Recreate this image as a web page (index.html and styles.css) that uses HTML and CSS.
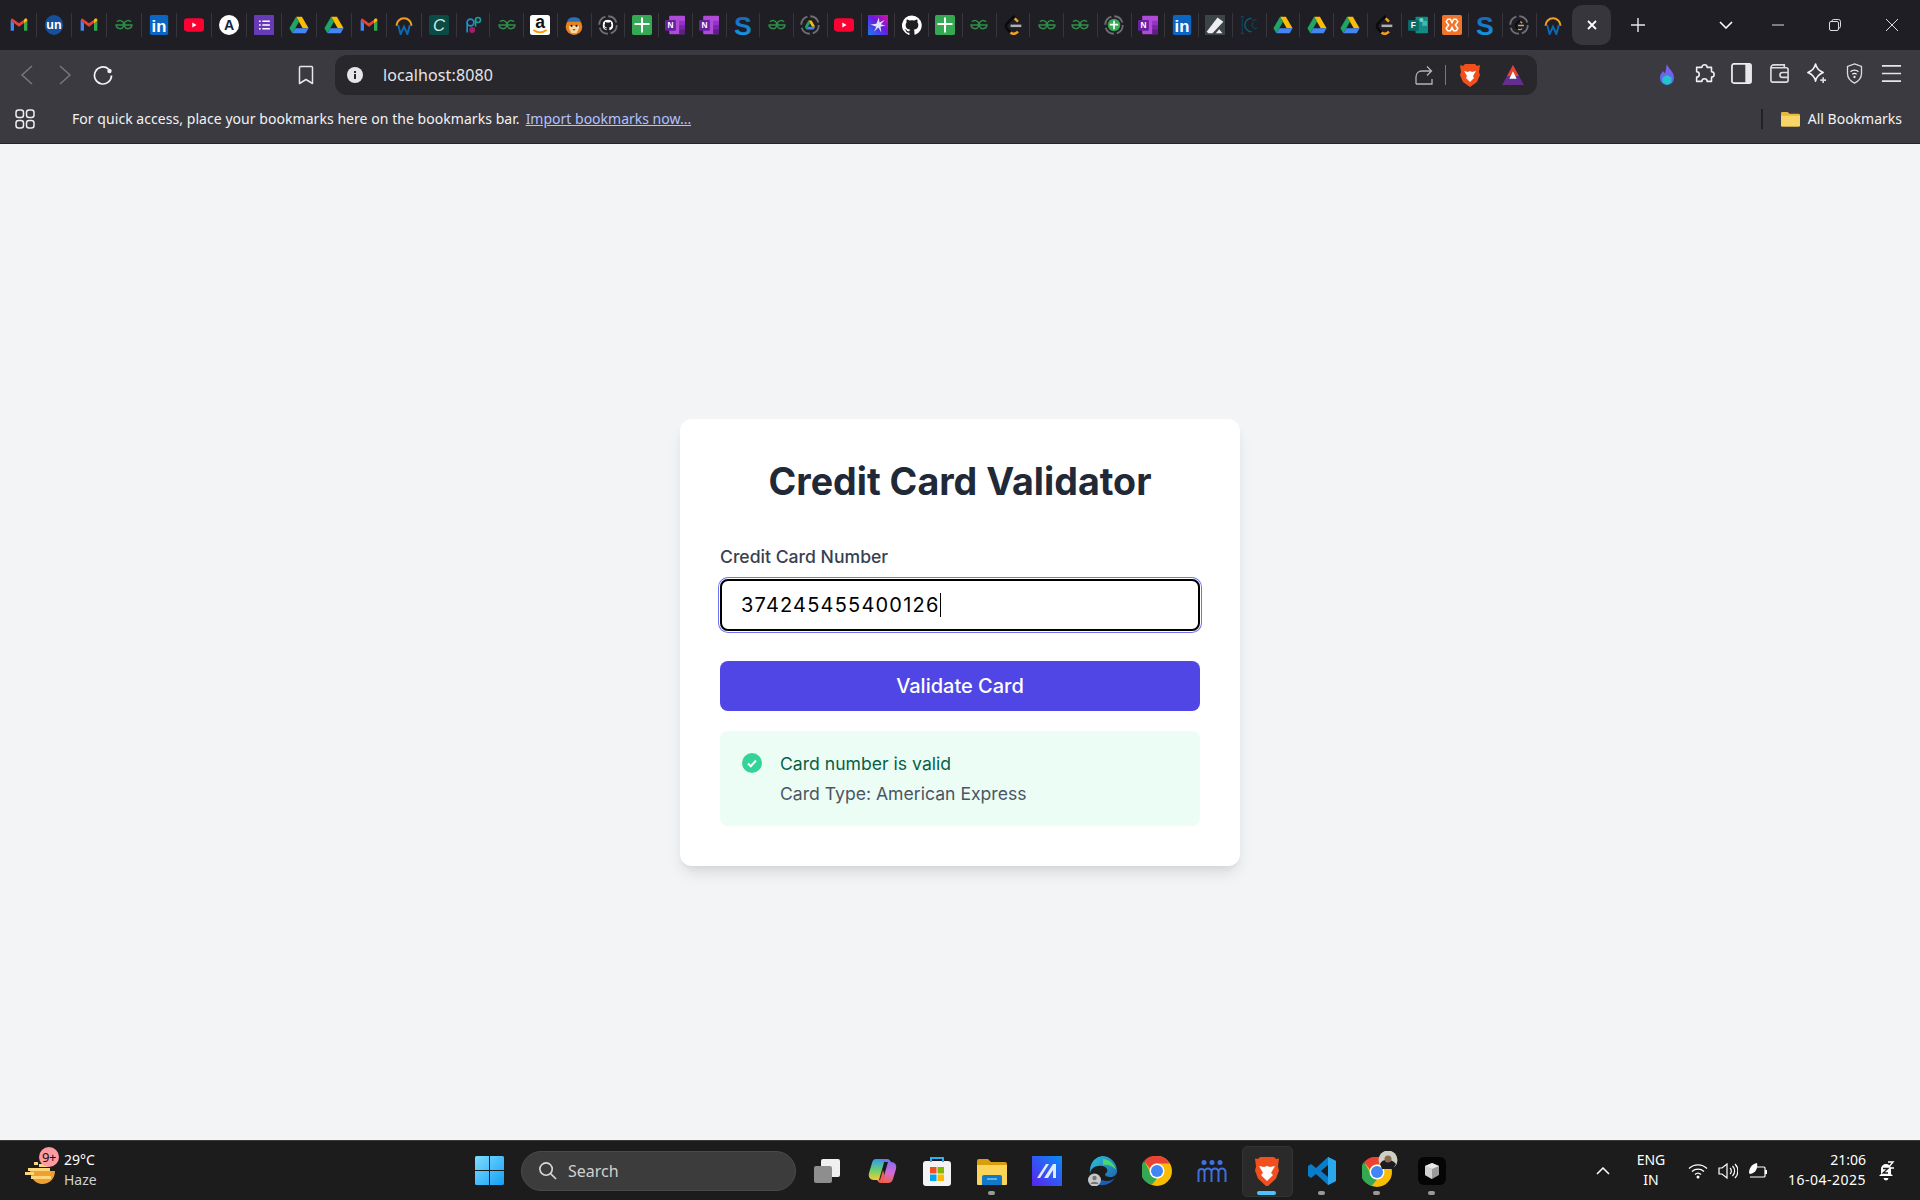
FILE: index.html
```html
<!DOCTYPE html>
<html lang="en">
  <head>
    <meta charset="UTF-8" />
    <meta name="viewport" content="width=device-width, initial-scale=1.0" />
    <title>Credit Card Validator</title>
    <link rel="stylesheet" href="styles.css">
  </head>
  <body>
    <svg class="defs" width="0" height="0">
      <defs>
        <linearGradient id="gStar" x1="0" y1="1" x2="1" y2="0"><stop offset="0" stop-color="#1a7cf0"/><stop offset=".55" stop-color="#6a1be0"/><stop offset="1" stop-color="#e0109a"/></linearGradient>
        <linearGradient id="gWin" x1="0" y1="0" x2="1" y2="1"><stop offset="0" stop-color="#7fdcff"/><stop offset="1" stop-color="#12a0f5"/></linearGradient>
        <linearGradient id="gS" x1="0" y1="0" x2="0" y2="1"><stop offset="0" stop-color="#1a56b0"/><stop offset="1" stop-color="#12a5e8"/></linearGradient>
        <linearGradient id="gCopL" x1="0" y1="0" x2="0" y2="1"><stop offset="0" stop-color="#2c9cf0"/><stop offset=".55" stop-color="#6fd16a"/><stop offset="1" stop-color="#f5c93a"/></linearGradient>
        <linearGradient id="gCopR" x1="0" y1="0" x2="0" y2="1"><stop offset="0" stop-color="#8a6cf0"/><stop offset=".55" stop-color="#d56ad0"/><stop offset="1" stop-color="#f0604a"/></linearGradient>
        <linearGradient id="gMat" x1="0" y1="1" x2="1" y2="0"><stop offset="0" stop-color="#5a22f0"/><stop offset="1" stop-color="#0a8cf5"/></linearGradient>
        <linearGradient id="gEdge" x1="0" y1="0" x2="1" y2="1"><stop offset="0" stop-color="#2cc4d8"/><stop offset="1" stop-color="#1a5fb0"/></linearGradient>
        <linearGradient id="gFlame" x1="0" y1="0" x2="0" y2="1"><stop offset="0" stop-color="#8a5cf0"/><stop offset="1" stop-color="#4a6cf0"/></linearGradient>

        <symbol id="i-gmail" viewBox="0 0 24 24">
          <path d="M2 6v13h4V10z" fill="#4285f4"/><path d="M18 10v9h4V6z" fill="#34a853"/>
          <path d="M2 6.5 12 14l10-7.5-1.5-2.5L12 10 3.5 4z" fill="#ea4335"/><path d="M18 6v4l4-3.5V6c0-1.5-1.5-2.5-3-1.5z" fill="#fbbc04"/>
        </symbol>
        <symbol id="i-un" viewBox="0 0 24 24">
          <ellipse cx="12" cy="12" rx="11" ry="12" fill="#17509a"/>
          <text x="12" y="17" text-anchor="middle" class="svg-t" font-size="15" font-weight="700" fill="#fff">un</text>
        </symbol>
        <symbol id="i-gfg" viewBox="0 0 24 24">
          <g fill="none" stroke="#2f8d46" stroke-width="1.8">
            <path d="M12 12h9.5a4.7 4.7 0 0 1-9 1.500V10a4.700 4.700 0 0 1 8-1.800"/>
            <path d="M12 12H2.500a4.700 4.700 0 0 0 9 1.500V10a4.700 4.700 0 0 0-8-1.800"/>
          </g>
        </symbol>
        <symbol id="i-in" viewBox="0 0 24 24">
          <rect x="1" width="22" height="24" rx="2" fill="#0a66c2"/>
          <text x="12" y="20" text-anchor="middle" class="svg-t" font-size="20" font-weight="700" fill="#fff">in</text>
        </symbol>
        <symbol id="i-yt" viewBox="0 0 24 24">
          <rect y="4" width="24" height="16" rx="4" fill="#ff0033"/><path d="M10 9v6l5-3z" fill="#fff"/>
        </symbol>
        <symbol id="i-a" viewBox="0 0 24 24">
          <circle cx="12" cy="12" r="12" fill="#fff"/>
          <text x="12" y="18" text-anchor="middle" class="svg-t" font-size="17" font-weight="700" fill="#14233f">A</text>
        </symbol>
        <symbol id="i-forms" viewBox="0 0 24 24">
          <rect width="24" height="24" rx="1" fill="#673ab7"/>
          <path d="M6 6.500h2v2H6zM10 6.500h9v2h-9zM6 11h2v2H6zM10 11h9v2h-9zM6 15.500h2v2H6zM10 15.500h9v2h-9z" fill="#fff"/>
        </symbol>
        <symbol id="i-drive" viewBox="0 0 24 24">
          <path d="M8.500 2h7l8 14h-7z" fill="#fbbc04"/><path d="M8.500 2 .5 16 4 22l8-14z" fill="#1fa463"/><path d="M4 22h16l3.500-6H7.500z" fill="#4285f4"/>
        </symbol>
        <symbol id="i-work" viewBox="0 0 24 24">
          <path d="M3 13a9 9 0 0 1 18 0" fill="none" stroke="#f0a01e" stroke-width="2.400"/>
          <path d="M5 12l3 11 4-9 4 9 3-11" fill="none" stroke="#0f68b0" stroke-width="2.400"/>
        </symbol>
        <symbol id="i-c" viewBox="0 0 24 24">
          <rect width="24" height="24" rx="3" fill="#0a4b45"/>
          <text x="12" y="19" text-anchor="middle" class="svg-t" font-size="20" font-style="italic" fill="#cfe8e0">C</text>
        </symbol>
        <symbol id="i-pf" viewBox="0 0 24 24">
          <g fill="none" stroke-width="2"><circle cx="9" cy="9" r="4" stroke="#1f8fd0"/><path d="M5 9v12" stroke="#1f8fd0"/><circle cx="18" cy="6" r="3" stroke="#1aa09a"/><path d="M15 6v8" stroke="#1aa09a"/></g>
          <circle cx="11" cy="18" r="3.500" fill="#a0206a"/>
        </symbol>
        <symbol id="i-amz" viewBox="0 0 24 24">
          <rect width="24" height="24" rx="3" fill="#fff"/>
          <text x="12" y="16" text-anchor="middle" class="svg-t" font-size="21" font-weight="700" fill="#111">a</text>
          <path d="M4 18c5 3.500 11 3.500 16 0" fill="none" stroke="#f90" stroke-width="2"/>
        </symbol>
        <symbol id="i-lion" viewBox="0 0 24 24">
          <circle cx="12" cy="14" r="10" fill="#e8811e"/><path d="M4 8c0-7 16-7 16 0z" fill="#2a6fb8"/>
          <path d="M6 13h12v3l-3 6H9l-3-6z" fill="#f7d9a8"/><circle cx="9" cy="13" r="1.300" fill="#222"/><circle cx="15" cy="13" r="1.300" fill="#222"/><path d="M10 17h4l-2 2z" fill="#6a3a1a"/>
        </symbol>
        <symbol id="i-gh" viewBox="0 0 24 24">
          <path fill="#fff" d="M12 .5a12 12 0 0 0-3.800 23.400c.6.1.8-.3.8-.6v-2.100c-3.300.7-4-1.600-4-1.600-.5-1.400-1.300-1.800-1.300-1.800-1.100-.7.100-.7.100-.7 1.200.1 1.800 1.200 1.800 1.200 1.100 1.800 2.800 1.300 3.500 1 .1-.8.400-1.300.8-1.600-2.700-.3-5.500-1.300-5.500-5.900 0-1.300.5-2.400 1.200-3.200-.1-.3-.5-1.500.1-3.200 0 0 1-.3 3.300 1.200a11.500 11.500 0 0 1 6 0c2.300-1.500 3.300-1.200 3.300-1.200.7 1.700.2 2.900.1 3.200.8.800 1.200 1.900 1.200 3.200 0 4.600-2.800 5.600-5.500 5.900.4.400.8 1.100.8 2.200v3.300c0 .3.200.7.800.6A12 12 0 0 0 12 .5z"/>
        </symbol>
        <symbol id="i-ring" viewBox="0 0 24 24">
          <circle cx="12" cy="12" r="10.500" fill="none" stroke="#6e6e72" stroke-width="2.200" stroke-dasharray="13 3.500"/>
        </symbol>
        <symbol id="i-ghring" viewBox="0 0 24 24">
          <use href="#i-ring"/><svg x="5.500" y="5.500" width="13" height="13" viewBox="0 0 24 24"><use href="#i-gh"/></svg>
        </symbol>
        <symbol id="i-sheet" viewBox="0 0 24 24">
          <rect width="24" height="24" rx="2" fill="#34a853"/><path d="M10.800 3h2.400v6.500H21v2.400h-7.800V21h-2.400v-9.100H3V9.500h7.800z" fill="#fff"/>
        </symbol>
        <symbol id="i-one" viewBox="0 0 24 24">
          <rect x="5" y="1" width="19" height="22" rx="1" fill="#b04ad8"/><rect x="17" y="7" width="7" height="5" fill="#9333c4"/><rect x="17" y="12" width="7" height="5" fill="#7a26a8"/><rect x="17" y="17" width="7" height="6" fill="#5f1d88"/>
          <rect y="6" width="13" height="13" rx="1" fill="#6a1fa0"/>
          <text x="6.500" y="16" text-anchor="middle" class="svg-t" font-size="10" font-weight="700" fill="#fff">N</text>
        </symbol>
        <symbol id="i-s" viewBox="0 0 24 24">
          <text x="12" y="23.500" text-anchor="middle" class="svg-t" font-size="32" font-weight="700" fill="url(#gS)">S</text>
        </symbol>
        <symbol id="i-drring" viewBox="0 0 24 24">
          <use href="#i-ring"/><svg x="5.500" y="5.500" width="13" height="13" viewBox="0 0 24 24"><use href="#i-drive"/></svg>
        </symbol>
        <symbol id="i-star" viewBox="0 0 24 24">
          <rect width="24" height="24" fill="url(#gStar)"/><path d="M13 3l.8 6L20 6l-4.500 5L21 13l-6 .8L16 21l-3.500-6L7 20l3-6L3 11.500l7-1z" fill="#dfe6f5"/>
        </symbol>
        <symbol id="i-lc" viewBox="0 0 24 24">
          <path d="M14 1 5 10c-2 2-2 5 0 7l4 4" fill="none" stroke="#0a0a0a" stroke-width="3"/>
          <path d="M14 4l4 4M9 21c3 2.500 6 2 9-1" fill="none" stroke="#f0a01e" stroke-width="3"/>
          <path d="M9 13h13" stroke="#b0b0b4" stroke-width="3"/>
        </symbol>
        <symbol id="i-plring" viewBox="0 0 24 24">
          <use href="#i-ring"/><circle cx="12" cy="12" r="7.500" fill="#34a853"/><path d="M11 7h2v3.500h4v2h-4V17h-2v-4.500H7v-2h4z" fill="#fff"/>
        </symbol>
        <symbol id="i-pen" viewBox="0 0 24 24">
          <rect width="24" height="24" fill="#3c4448"/><path d="M2 20 15 3l7 5-13 14H4z" fill="#eceeef"/><path d="M13 22l4-5 4 5z" fill="#eceeef"/>
        </symbol>
        <symbol id="i-ic" viewBox="0 0 24 24">
          <path d="M4 2v20M2 2h4M2 22h4" fill="none" stroke="#123d52" stroke-width="1.500"/>
          <path d="M15 4a8 8 0 1 0 0 16" fill="none" stroke="#0e5a70" stroke-width="1.800"/>
          <path d="M18 8a4.500 4.500 0 0 0 0 8h4M16 6h5" fill="none" stroke="#0e4a60" stroke-width="1.200"/>
        </symbol>
        <symbol id="i-fteal" viewBox="0 0 24 24">
          <rect x="9" y="2" width="15" height="20" rx="1" fill="#128b84"/><rect x="17" y="7" width="6" height="6" fill="#3fb8ab"/><circle cx="16" cy="6" r="2.500" fill="#6fd2c6"/>
          <rect y="6" width="13" height="13" rx="1" fill="#0b6a68"/>
          <text x="6.500" y="16" text-anchor="middle" class="svg-t" font-size="10" font-weight="700" fill="#fff">F</text>
        </symbol>
        <symbol id="i-xampp" viewBox="0 0 24 24">
          <rect width="24" height="24" rx="2" fill="#f0742a"/>
          <path d="M7 5h3l2 4 2-4h3l2 3-3 4 3 4-2 3h-3l-2-4-2 4H7l-2-3 3-4-3-4z" fill="none" stroke="#fff" stroke-width="1.800"/>
        </symbol>
        <symbol id="i-lcring" viewBox="0 0 24 24">
          <use href="#i-ring"/><svg x="6" y="5" width="13" height="14" viewBox="0 0 24 24"><use href="#i-lc"/></svg>
        </symbol>
      </defs>
    </svg>

    <header class="chrome">
      <div class="tabstrip">
        <div class="tabs tabs-wide">
          <div class="tab"><svg class="fav"><use href="#i-gmail"/></svg></div>
          <div class="tab"><svg class="fav"><use href="#i-un"/></svg></div>
          <div class="tab"><svg class="fav"><use href="#i-gmail"/></svg></div>
          <div class="tab"><svg class="fav"><use href="#i-gfg"/></svg></div>
          <div class="tab"><svg class="fav"><use href="#i-in"/></svg></div>
          <div class="tab"><svg class="fav"><use href="#i-yt"/></svg></div>
          <div class="tab"><svg class="fav"><use href="#i-a"/></svg></div>
          <div class="tab"><svg class="fav"><use href="#i-forms"/></svg></div>
          <div class="tab"><svg class="fav"><use href="#i-drive"/></svg></div>
          <div class="tab"><svg class="fav"><use href="#i-drive"/></svg></div>
          <div class="tab"><svg class="fav"><use href="#i-gmail"/></svg></div>
          <div class="tab"><svg class="fav"><use href="#i-work"/></svg></div>
          <div class="tab"><svg class="fav"><use href="#i-c"/></svg></div>
        </div>
        <div class="tabs">
          <div class="tab"><svg class="fav"><use href="#i-pf"/></svg></div>
          <div class="tab"><svg class="fav"><use href="#i-gfg"/></svg></div>
          <div class="tab"><svg class="fav"><use href="#i-amz"/></svg></div>
          <div class="tab"><svg class="fav"><use href="#i-lion"/></svg></div>
          <div class="tab"><svg class="fav"><use href="#i-ghring"/></svg></div>
          <div class="tab"><svg class="fav"><use href="#i-sheet"/></svg></div>
          <div class="tab"><svg class="fav"><use href="#i-one"/></svg></div>
          <div class="tab"><svg class="fav"><use href="#i-one"/></svg></div>
          <div class="tab"><svg class="fav"><use href="#i-s"/></svg></div>
          <div class="tab"><svg class="fav"><use href="#i-gfg"/></svg></div>
          <div class="tab"><svg class="fav"><use href="#i-drring"/></svg></div>
          <div class="tab"><svg class="fav"><use href="#i-yt"/></svg></div>
          <div class="tab"><svg class="fav"><use href="#i-star"/></svg></div>
          <div class="tab"><svg class="fav"><use href="#i-gh"/></svg></div>
          <div class="tab"><svg class="fav"><use href="#i-sheet"/></svg></div>
          <div class="tab"><svg class="fav"><use href="#i-gfg"/></svg></div>
          <div class="tab"><svg class="fav"><use href="#i-lc"/></svg></div>
          <div class="tab"><svg class="fav"><use href="#i-gfg"/></svg></div>
          <div class="tab"><svg class="fav"><use href="#i-gfg"/></svg></div>
          <div class="tab"><svg class="fav"><use href="#i-plring"/></svg></div>
          <div class="tab"><svg class="fav"><use href="#i-one"/></svg></div>
          <div class="tab"><svg class="fav"><use href="#i-in"/></svg></div>
          <div class="tab"><svg class="fav"><use href="#i-pen"/></svg></div>
          <div class="tab"><svg class="fav"><use href="#i-ic"/></svg></div>
          <div class="tab"><svg class="fav"><use href="#i-drive"/></svg></div>
          <div class="tab"><svg class="fav"><use href="#i-drive"/></svg></div>
          <div class="tab"><svg class="fav"><use href="#i-drive"/></svg></div>
          <div class="tab"><svg class="fav"><use href="#i-lc"/></svg></div>
          <div class="tab"><svg class="fav"><use href="#i-fteal"/></svg></div>
          <div class="tab"><svg class="fav"><use href="#i-xampp"/></svg></div>
          <div class="tab"><svg class="fav"><use href="#i-s"/></svg></div>
          <div class="tab"><svg class="fav"><use href="#i-lcring"/></svg></div>
          <div class="tab tab-last"><svg class="fav"><use href="#i-work"/></svg></div>
        </div>
        <div class="tab-active">
          <svg class="ico12" viewBox="0 0 12 12"><path d="M2 2l8 8M10 2l-8 8" stroke="#fff" stroke-width="1.800"/></svg>
        </div>
        <svg class="newtab" viewBox="0 0 14 14"><path d="M7 0v14M0 7h14" stroke="#e8e8ea" stroke-width="1.400"/></svg>
        <svg class="tabsearch" viewBox="0 0 14 8"><path d="M1 1l6 6 6-6" fill="none" stroke="#fff" stroke-width="1.600"/></svg>
        <div class="winbtn winbtn-first"><svg class="ico14" viewBox="0 0 14 14"><path d="M1 7h12" stroke="#dcdcde"/></svg></div>
        <div class="winbtn"><svg class="ico14" viewBox="0 0 14 14"><rect x="1.500" y="3.500" width="9" height="9" rx="1.500" fill="none" stroke="#dcdcde"/><path d="M4 3.500V3a1.500 1.500 0 0 1 1.500-1.500h5a2 2 0 0 1 2 2v5a1.500 1.500 0 0 1-1.500 1.500" fill="none" stroke="#dcdcde"/></svg></div>
        <div class="winbtn"><svg class="ico14" viewBox="0 0 14 14"><path d="M1 1l12 12M13 1 1 13" stroke="#dcdcde"/></svg></div>
      </div>

      <div class="toolbar">
        <div class="slot"><svg class="ico20" viewBox="0 0 20 20"><path d="M15 1 5 10l10 9" fill="none" stroke="#77777c" stroke-width="1.500"/></svg></div>
        <div class="slot"><svg class="ico20" viewBox="0 0 20 20"><path d="M5 1l10 9-10 9" fill="none" stroke="#77777c" stroke-width="1.500"/></svg></div>
        <div class="slot"><svg class="ico20" viewBox="0 0 20 20"><path d="M15.500 4A8.500 8.500 0 1 0 18.500 10.500" fill="none" stroke="#f2f2f3" stroke-width="1.700"/><circle cx="16.500" cy="6" r="2.200" fill="#f2f2f3"/></svg></div>
        <div class="slot slot-bookmark"><svg class="ico20" viewBox="0 0 20 20"><path d="M3.500 2.500a1 1 0 0 1 1-1h11a1 1 0 0 1 1 1V18.500l-6.500-4-6.500 4z" fill="none" stroke="#e6e6e8" stroke-width="1.500" stroke-linejoin="round"/></svg></div>
        <div class="omnibox">
          <svg class="info" viewBox="0 0 16 16"><circle cx="8" cy="8" r="8" fill="#e6e6e8"/><path d="M7 7h2v5H7zM7 4h2v2H7z" fill="#27272c"/></svg>
          <span class="url">localhost:8080</span>
          <svg class="ico20 share" viewBox="0 0 20 20"><path d="M2 19v-7c0-3.500 2.500-6 6-6h9M13 1.500 17.500 6 13 10.500" fill="none" stroke="#b4b4b8" stroke-width="1.300"/><path d="M2 19h16v-5" fill="none" stroke="#b4b4b8" stroke-width="1.300"/></svg>
          <span class="omni-sep"></span>
          <svg class="brave" viewBox="0 0 20 24"><path d="M5 1h10l2 2 3-1-1 7 1 3-3 7-7 5-7-5-3-7 1-3-1-7 3 1z" fill="#f1501e"/><path d="M4 8l4 1 2-1 2 1 4-1-3 5 1 2-4 4-4-4 1-2z" fill="#fff"/></svg>
          <svg class="bat" viewBox="0 0 24 22"><path d="M12 0l12 22H0z" fill="#662d91"/><path d="M12 0l6.500 12h-13z" fill="#e8412a"/><path d="M12 7l4 8H8z" fill="#fff"/></svg>
        </div>
        <div class="ext-group">
          <div class="ext"><svg class="ico24" viewBox="0 0 20 24"><path d="M10 1c1 5 7 7 7 14a7 7 0 0 1-14 0c0-4 2-5 3-7 1 1 1 2 2 2 1-3 1-6 2-9z" fill="url(#gFlame)"/><path d="M10 12l4.500 2.500v5L10 22l-4.500-2.500v-5z" fill="#22c4c8"/></svg></div>
          <div class="ext"><svg class="ico22" viewBox="0 0 24 24"><path d="M9 5a3 3 0 0 1 6 0h5v5a3 3 0 0 1 0 6v5h-5a3 3 0 0 0-6 0H3v-5a3 3 0 0 0 0-6V5z" fill="none" stroke="#f0f0f2" stroke-width="1.800" stroke-linejoin="round"/></svg></div>
          <div class="ext"><svg class="ico22" viewBox="0 0 22 22"><rect x="1" y="1" width="20" height="20" rx="2" fill="none" stroke="#f0f0f2" stroke-width="1.800"/><rect x="15" y="1" width="6" height="20" fill="#e8e8ea"/></svg></div>
          <div class="ext"><svg class="ico22" viewBox="0 0 22 22"><path d="M2 5a3 3 0 0 1 3-3h11v3M2 5v13a2 2 0 0 0 2 2h14a2 2 0 0 0 2-2V7a2 2 0 0 0-2-2zM20 10h-6a2 2 0 0 0 0 5h6" fill="none" stroke="#dcdcde" stroke-width="1.700"/></svg></div>
          <div class="ext"><svg class="ico22" viewBox="0 0 22 22"><path d="M10 1c1 5 3 7 8 9-5 2-7 4-8 9-1-5-3-7-8-9 5-2 7-4 8-9z" fill="none" stroke="#f0f0f2" stroke-width="1.700" stroke-linejoin="round"/><path d="M18 15v6M15 18h6" stroke="#dcdcde" stroke-width="1.700"/></svg></div>
          <div class="ext"><svg class="ico22" viewBox="0 0 20 24"><path d="M10 1l8 3v8c0 5-4 9-8 11-4-2-8-6-8-11V4z" fill="none" stroke="#dcdcde" stroke-width="1.500"/><path d="M5.500 10a6.500 6.500 0 0 1 9 0M7.500 13a3.500 3.500 0 0 1 5 0" fill="none" stroke="#f0f0f2" stroke-width="1.500"/><circle cx="10" cy="16" r="1.300" fill="#f0f0f2"/></svg></div>
          <div class="ext"><svg class="ico22" viewBox="0 0 22 22"><path d="M1 3h20M1 11h20M1 19h20" stroke="#e6e6e8" stroke-width="1.600"/></svg></div>
        </div>
      </div>

      <div class="bookmarks">
        <svg class="apps" viewBox="0 0 20 20"><g fill="none" stroke="#eee" stroke-width="1.500"><rect x="1" y="1" width="7.500" height="7.500" rx="2.500"/><rect x="11.500" y="1" width="7.500" height="7.500" rx="2.500"/><rect x="1" y="11.500" width="7.500" height="7.500" rx="2.500"/><rect x="11.500" y="11.500" width="7.500" height="7.500" rx="2.500"/></g></svg>
        <span class="bm-text">For quick access, place your bookmarks here on the bookmarks bar.</span>
        <a class="bm-link" href="#">Import bookmarks now...</a>
        <span class="bm-sep"></span>
        <svg class="folder" viewBox="0 0 20 16"><path d="M0 2a1.500 1.500 0 0 1 1.500-1.500H7l2 2h9.500A1.500 1.500 0 0 1 20 4v10.500a1.500 1.500 0 0 1-1.500 1.500h-17A1.500 1.500 0 0 1 0 14.500z" fill="#e8b83a"/><path d="M0 4.500h20v10a1.500 1.500 0 0 1-1.500 1.500h-17A1.500 1.500 0 0 1 0 14.500z" fill="#f8d568"/></svg>
        <span class="bm-all">All Bookmarks</span>
      </div>
    </header>

    <main class="page">
      <form class="card">
        <h1>Credit Card Validator</h1>
        <label for="cardNumber">Credit Card Number</label>
        <div class="input-box" id="cardNumber">
          <span>374245455400126</span><span class="caret"></span>
        </div>
        <button type="button">Validate Card</button>
        <div class="result">
          <svg class="check" viewBox="0 0 20 20"><circle cx="10" cy="10" r="10" fill="#34d399"/><path d="M6 10.500l2.800 2.700L14 7.500" fill="none" stroke="#fff" stroke-width="2"/></svg>
          <div>
            <p class="valid">Card number is valid</p>
            <p class="type">Card Type: American Express</p>
          </div>
        </div>
      </form>
    </main>

    <footer class="taskbar">
      <div class="weather">
        <span class="weather-icon">
          <svg viewBox="0 0 30 26"><path d="M5 13h25c0 7-5 13-13 13-6 0-11-5-12-13z" fill="#f0a030"/><path d="M9 4h4v3H9zM14 6h9v3h-9zM3 10h22v3H3zM0 14h9v3H0zM6 18h20v3H6z" fill="#fbd77a"/></svg>
          <span class="badge">9+</span>
        </span>
        <div class="weather-text">
          <span>29°C</span>
          <span class="dim">Haze</span>
        </div>
      </div>
      <div class="apps-row">
        <svg class="win" viewBox="0 0 29 29"><path d="M0 1.500A1.500 1.500 0 0 1 1.500 0H14v14H0zM15 0h12.500A1.500 1.500 0 0 1 29 1.500V14H15zM0 15h14v14H1.500A1.500 1.500 0 0 1 0 27.500zM15 15h14v12.500a1.500 1.500 0 0 1-1.500 1.500H15z" fill="url(#gWin)"/></svg>
        <div class="search">
          <svg class="search-ico" viewBox="0 0 20 20"><circle cx="8.500" cy="8.500" r="6.500" fill="none" stroke="#d8d8d8" stroke-width="1.700"/><path d="M13.500 13.500 19 19" stroke="#d8d8d8" stroke-width="1.700"/></svg>
          <span>Search</span>
        </div>
        <div class="task"><svg class="ico30" viewBox="0 0 30 30"><rect x="9" y="3" width="19" height="18" rx="2" fill="#f0f0f0"/><rect x="2" y="10" width="18" height="17" rx="2" fill="#8e8e8e"/></svg></div>
        <div class="task"><svg class="ico30" viewBox="0 0 30 30"><path d="M9 3h9l-6 21H7c-4 0-6-3-5-7L5 7c.6-2.500 2-4 4-4z" fill="url(#gCopL)"/><path d="M21 27h-6l6-21h3c4 0 6 3 5 7l-3 10c-.6 2.500-2.500 4-5 4z" fill="url(#gCopR)"/><path d="M9 3h11c2 0 3 1 4 3h-6z" fill="#6a7cf0"/><path d="M10 24h3l3-10 2 7-3 6h-1c-2 0-3-1-4-3z" fill="#f0604a"/></svg></div>
        <div class="task"><svg class="ico30" viewBox="0 0 30 30"><rect x="1" y="5" width="28" height="25" rx="3" fill="#f4f4f4"/><path d="M9 6V2h12v4" fill="none" stroke="#2cb0f0" stroke-width="2"/><path d="M8 11h6.500v6.500H8z" fill="#f25022"/><path d="M15.500 11H22v6.500h-6.500z" fill="#7fba00"/><path d="M8 18.500h6.500V25H8z" fill="#00a4ef"/><path d="M15.500 18.500H22V25h-6.500z" fill="#ffb900"/></svg></div>
        <div class="task running"><svg class="ico30" viewBox="0 0 30 30"><path d="M0 5a2 2 0 0 1 2-2h9l3 3h14a2 2 0 0 1 2 2v20H0z" fill="#d99e0e"/><path d="M0 9h30v19a1 1 0 0 1-1 1H1a1 1 0 0 1-1-1z" fill="#fcd45a"/><path d="M5 21a2 2 0 0 1 2-2h16a2 2 0 0 1 2 2v8H5z" fill="#0f78c8"/><path d="M10 23h10" stroke="#7dc4f0" stroke-width="1.500"/></svg></div>
        <div class="task"><svg class="ico30" viewBox="0 0 30 30"><rect width="30" height="30" fill="url(#gMat)"/><path d="M5 22 14 8h3L8 22zM12 22 21 8h3v14h-3V14l-5 8z" fill="#dfe9ff"/></svg></div>
        <div class="task">
          <svg class="ico30" viewBox="0 0 30 30"><path d="M15 0a15 15 0 0 1 15 15c0 4-3 6-7 6-3 0-5-1-5-3 2-1 3-3 2-5-2-4-10-4-14-1S2 20 8 26A15 15 0 0 1 15 0z" fill="url(#gEdge)"/><path d="M10 28c6 3 14 0 18-6-3 3-9 4-13 2z" fill="#1a5fb0"/><path d="M16 3c6 0 12 5 13 11-3-4-8-6-13-5z" fill="#4ad66d"/><circle cx="7.500" cy="24" r="6.500" fill="#c8c8c8"/><circle cx="7.500" cy="22" r="2.200" fill="#777"/><path d="M3.500 28c1-3 7-3 8 0z" fill="#777"/></svg>
        </div>
        <div class="task">
          <svg class="ico30" viewBox="0 0 30 30"><circle cx="15" cy="15" r="15" fill="#fbbc04"/><path d="M15 0a15 15 0 0 1 13 7.500H15a7.500 7.500 0 0 0-7 5L2 5A15 15 0 0 1 15 0z" fill="#ea4335"/><path d="M2 5l6.500 11.500A7.500 7.500 0 0 0 15 22.500L9.500 29A15 15 0 0 1 2 5z" fill="#34a853"/><circle cx="15" cy="15" r="7.500" fill="#fff"/><circle cx="15" cy="15" r="6" fill="#4285f4"/></svg>
        </div>
        <div class="task"><svg class="ico30" viewBox="0 0 30 24"><g fill="#3f6fe0"><circle cx="7" cy="3.500" r="2.500"/><circle cx="15" cy="3.500" r="2.500"/><circle cx="23" cy="3.500" r="2.500"/></g><path d="M1.500 23V13a3 3 0 0 1 6 0v10M7.500 13a3.500 3.500 0 0 1 7 0v10M14.500 13a3.500 3.500 0 0 1 7 0v10M21.500 13a3.500 3.500 0 0 1 7 0v10" fill="none" stroke="#3f6fe0" stroke-width="2"/></svg></div>
        <div class="task task-active running-active"><svg class="ico30" viewBox="0 0 26 30"><path d="M6 1h14l2 2 3-.5-1 8 1 4-3 8-9 8.500L4 22.500l-3-8 1-4-1-8 3 .5z" fill="#f1501e"/><path d="M5 10l5 1 3-1 3 1 5-1-4 7 2 2-6 6-6-6 2-2z" fill="#fff"/></svg></div>
        <div class="task running"><svg class="ico30" viewBox="0 0 30 30"><path d="M21 1l8 4v20l-8 4L9 18l-5 4-3-2v-10l3-2 5 4z" fill="#0a7cc9"/><path d="M21 1v28l8-4V5z" fill="#2aa7ee"/><path d="M21 9l-7 6 7 6z" fill="#1c1c1c"/></svg></div>
        <div class="task running">
          <svg class="ico30 chrome-user" viewBox="0 0 36 36"><g transform="translate(0 6)"><circle cx="15" cy="15" r="15" fill="#fbbc04"/><path d="M15 0a15 15 0 0 1 13 7.500H15a7.500 7.500 0 0 0-7 5L2 5A15 15 0 0 1 15 0z" fill="#ea4335"/><path d="M2 5l6.500 11.500A7.500 7.500 0 0 0 15 22.500L9.500 29A15 15 0 0 1 2 5z" fill="#34a853"/><circle cx="15" cy="15" r="7.500" fill="#fff"/><circle cx="15" cy="15" r="6" fill="#4285f4"/></g><circle cx="26" cy="9" r="9.500" fill="#cfcfc4"/><path d="M18 13c2-5 11-6 16 0l-3 5H20z" fill="#1c1c1e"/><circle cx="26" cy="8" r="3.500" fill="#8a6a55"/></svg>
        </div>
        <div class="task running"><svg class="ico30" viewBox="0 0 30 30"><rect width="28" height="28" x="1" y="1" rx="6" fill="#050505"/><path d="M15 7l7 3v9l-7 4-7-4v-9z" fill="#9a9a9a"/><path d="M8 10l7 3 7-3-7-3z" fill="#e8e8e8"/><path d="M15 13v10l-7-4v-9z" fill="#d0d0d0"/></svg></div>
      </div>
      <div class="tray">
        <svg class="caret-up" viewBox="0 0 14 8"><path d="M1 7l6-6 6 6" fill="none" stroke="#fff" stroke-width="1.500"/></svg>
        <div class="lang"><span>ENG</span><span>IN</span></div>
        <svg class="tray-ico" viewBox="0 0 20 16"><path d="M1 5.500a13 13 0 0 1 18 0M4 8.500a9 9 0 0 1 12 0M7 11.500a4.500 4.500 0 0 1 6 0" fill="none" stroke="#fff" stroke-width="1.300"/><circle cx="10" cy="14" r="1.500" fill="#fff"/></svg>
        <svg class="tray-ico" viewBox="0 0 20 16"><path d="M1 5h3l5-4v14l-5-4H1z" fill="none" stroke="#fff" stroke-width="1.200"/><path d="M12 5a4 4 0 0 1 0 6M14.500 3a7 7 0 0 1 0 10M17 1a10 10 0 0 1 0 14" fill="none" stroke="#fff" stroke-width="1.200"/></svg>
        <svg class="tray-ico" viewBox="0 0 20 16"><path d="M9 4h7a1 1 0 0 1 1 1v8a1 1 0 0 1-1 1H2" fill="none" stroke="#fff" stroke-width="1.200"/><path d="M17 7h2v4h-2z" fill="#fff"/><path d="M1 10C1 5 4 1 9 0c1 5-1 10-7 11z" fill="#fff"/></svg>
        <div class="clock"><span>21:06</span><span class="date">16-04-2025</span></div>
        <svg class="bell" viewBox="0 0 18 20"><path d="M9 3a5 5 0 0 1 5 5v5l2 2H2l2-2V8a5 5 0 0 1 5-5z" fill="#fff"/><path d="M6.500 17h5a2.500 2.500 0 0 1-5 0z" fill="#fff"/><path d="M11 1h5l-5 6h6" fill="none" stroke="#fff" stroke-width="1.400"/><path d="M6 7.500h5l-5 4.500h5" fill="none" stroke="#1c1c1c" stroke-width="1.300"/></svg>
      </div>
    </footer>
  </body>
</html>
```

FILE: styles.css
```css
* {
  box-sizing: border-box;
}
html,
body {
  height: 100%;
}
body {
  margin: 0;
  display: flex;
  flex-direction: column;
  height: 1200px;
  overflow: hidden;
  background-color: #f3f4f6;
  font-family: Inter, "Liberation Sans", sans-serif;
}
svg {
  display: block;
  flex: none;
}
.defs {
  position: absolute;
}
.svg-t {
  font-family: "Liberation Sans", sans-serif;
}

/* browser chrome */
.chrome {
  flex: none;
  font-family: "Noto Sans", sans-serif;
}
.tabstrip {
  display: flex;
  align-items: center;
  height: 50px;
  padding-left: 1.5px;
  background-color: #1e1e24;
}
.tabs {
  display: flex;
}
.tab {
  width: 33.75px;
  height: 24px;
  display: flex;
  justify-content: center;
  border-right: 1px solid #36363b;
}
.tabs-wide .tab {
  width: 35px;
}
.tab-last {
  border-right: none;
}
.fav {
  width: 20px;
  height: 20px;
  margin-top: 2px;
}
.tab-active {
  width: 39px;
  height: 40px;
  margin-left: 2px;
  display: flex;
  align-items: center;
  justify-content: center;
  border-radius: 10px;
  background-color: #36363c;
}
.ico12 {
  width: 12px;
  height: 12px;
}
.newtab {
  width: 14px;
  height: 14px;
  margin-left: 20px;
}
.tabsearch {
  width: 14px;
  height: 8px;
  margin-left: 74px;
}
.winbtn {
  width: 57px;
  display: flex;
  justify-content: center;
}
.winbtn-first {
  margin-left: 16px;
}
.ico14 {
  width: 14px;
  height: 14px;
}
.toolbar {
  display: flex;
  align-items: center;
  height: 50px;
  padding: 5px 0 5px 8px;
  background-color: #3a3a40;
}
.slot {
  width: 38px;
  display: flex;
  justify-content: center;
}
.slot-bookmark {
  margin-left: 165px;
}
.ico20 {
  width: 20px;
  height: 20px;
}
.omnibox {
  width: 1202px;
  height: 40px;
  margin-left: 10px;
  display: flex;
  align-items: center;
  padding-left: 12px;
  border-radius: 12px;
  background-color: #27272c;
}
.info {
  width: 16px;
  height: 16px;
}
.url {
  margin-left: 20px;
  font-size: 16px;
  letter-spacing: 0.1px;
  color: #e4e4e8;
}
.share {
  margin-left: auto;
}
.omni-sep {
  width: 1px;
  height: 20px;
  margin-left: 11px;
  background-color: #77777c;
}
.brave {
  width: 20px;
  height: 24px;
  margin-left: 14px;
}
.bat {
  width: 22px;
  height: 20px;
  margin: 0 13px 0 22px;
}
.ext-group {
  display: flex;
  margin-left: 111px;
}
.ext {
  width: 37.5px;
  display: flex;
  justify-content: center;
}
.ico24 {
  width: 20px;
  height: 24px;
}
.ico22 {
  width: 21px;
  height: 21px;
}
.bookmarks {
  display: flex;
  align-items: center;
  height: 44px;
  padding: 0 18px 6px 15px;
  font-size: 14px;
  color: #f2f2f4;
  background-color: #3a3a40;
  border-bottom: 1px solid #26262a;
}
.apps {
  width: 20px;
  height: 20px;
}
.bm-text {
  margin-left: 37px;
  letter-spacing: 0.05px;
}
.bm-link {
  margin-left: 6px;
  color: #b4c0ff;
}
.bm-sep {
  width: 2px;
  height: 20px;
  margin-left: auto;
  background-color: #222226;
}
.folder {
  width: 19px;
  height: 16px;
  margin-left: 18px;
}
.bm-all {
  margin-left: 8px;
}

/* the page */
.page {
  flex: 1;
  display: flex;
  align-items: center;
  justify-content: center;
  padding-top: 1px;
}
.card {
  width: 560px;
  padding: 41px 40px 40px;
  border-radius: 12px;
  background-color: #fff;
  box-shadow: 0 10px 15px -3px rgba(0, 0, 0, 0.1), 0 4px 6px -2px rgba(0, 0, 0, 0.05);
}
h1 {
  margin: 0 0 41px;
  text-align: center;
  font-size: 37.6px;
  line-height: 44px;
  font-weight: 700;
  color: #1f2937;
}
label {
  display: block;
  margin-bottom: 10px;
  font-size: 17.6px;
  line-height: 24px;
  font-weight: 450;
  color: #374151;
}
.input-box {
  height: 52px;
  display: flex;
  align-items: center;
  padding-left: 19px;
  border-radius: 8px;
  border: 2px solid #000;
  box-shadow: 0 0 0 1px #fff, 0 0 0 2px #6f72f2;
  font-size: 20px;
  letter-spacing: 1.2px;
  color: #000;
}
.caret {
  width: 1px;
  height: 24px;
  background-color: #000;
}
button {
  display: block;
  width: 100%;
  height: 50px;
  margin-top: 30px;
  border: none;
  border-radius: 8px;
  background-color: #4f46e5;
  color: #fff;
  font-family: inherit;
  font-size: 20px;
  font-weight: 500;
}
.result {
  display: flex;
  height: 95px;
  margin-top: 20px;
  padding: 22px 22px 0;
  border-radius: 8px;
  background-color: #ecfdf5;
  font-size: 17.6px;
}
.check {
  width: 20px;
  height: 20px;
  margin-right: 18px;
}
.result p {
  margin: 0;
  line-height: 30px;
}
.result div {
  margin-top: -4px;
}
.valid {
  color: #065f46;
}
.type {
  color: #4b5563;
}

/* windows taskbar */
.taskbar {
  flex: none;
  display: flex;
  align-items: center;
  height: 60px;
  background-color: #1c1c1c;
  border-top: 1px solid #3a3a3a;
  color: #fff;
  font-family: "Noto Sans", sans-serif;
  font-size: 14px;
}
.weather {
  width: 475px;
  display: flex;
  align-items: center;
  padding-left: 25px;
}
.weather-icon {
  position: relative;
  width: 30px;
  height: 26px;
}
.badge {
  position: absolute;
  left: 14px;
  top: -11px;
  width: 20px;
  height: 20px;
  border-radius: 50%;
  text-align: center;
  line-height: 20px;
  font-size: 13px;
  letter-spacing: -0.5px;
  background-color: #ff9aa2;
  color: #111;
}
.weather-text {
  display: flex;
  flex-direction: column;
  margin: 0 0 2px 9px;
  line-height: 20px;
}
.dim {
  color: #d0d0d0;
}
.apps-row {
  display: flex;
  align-items: center;
  width: 985px;
}
.win {
  width: 29px;
  height: 29px;
}
.search {
  width: 275px;
  height: 40px;
  margin: 0 3px 0 17px;
  display: flex;
  align-items: center;
  padding-left: 16px;
  border-radius: 20px;
  border: 1px solid #4a4a4a;
  background-color: #3c3c3c;
  font-size: 16px;
  color: #d0d0d0;
}
.search-ico {
  width: 19px;
  height: 19px;
  margin-right: 11px;
}
.task {
  position: relative;
  width: 55px;
  height: 50px;
  display: flex;
  align-items: center;
  justify-content: center;
}
.ico30 {
  width: 30px;
  height: 30px;
}
.chrome-user {
  width: 36px;
  height: 36px;
  margin: -4px 0 0 6px;
}
.task-active::before {
  content: "";
  position: absolute;
  left: 3px;
  top: 0;
  width: 49px;
  height: 49px;
  border-radius: 5px;
  border: 1px solid #333;
  background-color: #2a2a2a;
}
.task-active svg {
  position: relative;
}
.running::after,
.running-active::after {
  content: "";
  position: absolute;
  bottom: 1px;
  left: 24px;
  width: 7px;
  height: 3.5px;
  border-radius: 2px;
  background-color: #9a9a9a;
}
.running-active::after {
  left: 18px;
  width: 19px;
  background-color: #4cc2ff;
}
.tray {
  flex: 1;
  display: flex;
  align-items: center;
}
.caret-up {
  width: 14px;
  height: 8px;
  margin-left: 136px;
}
.lang {
  width: 50px;
  margin: 0 0 2px 16px;
  display: flex;
  flex-direction: column;
  align-items: center;
  line-height: 20px;
}
.tray-ico {
  width: 20px;
  height: 16px;
  margin-left: 10px;
}
.lang + .tray-ico {
  margin-left: 12px;
}
.clock {
  width: 93px;
  margin: 0 0 2px 5px;
  display: flex;
  flex-direction: column;
  align-items: flex-end;
  line-height: 20px;
}
.date {
  letter-spacing: 0.5px;
}
.bell {
  width: 18px;
  height: 20px;
  margin-left: 11px;
}
```
